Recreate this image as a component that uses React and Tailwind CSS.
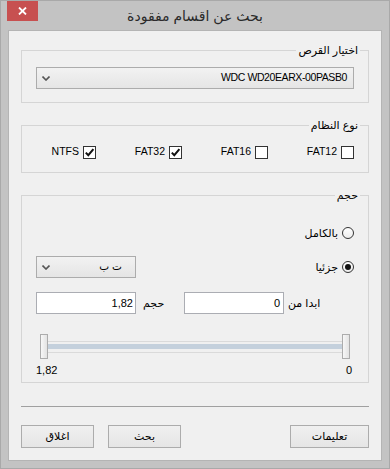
const FONT = "font-['Liberation_Sans','DejaVu_Sans',sans-serif]";

function Chevron() {
  return (
    <svg width="8" height="5" viewBox="0 0 8 5">
      <path d="M0.5 0.5 L4 4 L7.5 0.5" fill="none" stroke="#555" strokeWidth="1.6" />
    </svg>
  );
}

function Combo({ label, className = "", textPad = "pr-[6px]" }) {
  return (
    <div
      className={`flex items-center justify-between h-[22px] border border-[#acacac] bg-gradient-to-b from-[#f2f2f2] to-[#e5e5e5] ${textPad} ${className}`}
    >
      <span className="text-[10.5px] text-black tracking-[-0.4px]">{label}</span>
      <span className="pl-[5px] flex items-center">
        <Chevron />
      </span>
    </div>
  );
}

function CheckBox({ label, checked }) {
  return (
    <div className="flex items-center gap-[4px]">
      <div className="w-[13px] h-[13px] border border-[#333] bg-white flex items-center justify-center">
        {checked && (
          <svg width="11" height="11" viewBox="0 0 11 11">
            <path d="M1.8 5.6 L4.3 8.2 L9.4 2.2" fill="none" stroke="#111" strokeWidth="2" />
          </svg>
        )}
      </div>
      <span className="text-[10.5px] text-black">{label}</span>
    </div>
  );
}

function Radio({ label, checked }) {
  return (
    <div className="flex items-center gap-[4px]">
      <div className="w-[12px] h-[12px] rounded-full border border-[#333] bg-gradient-to-b from-white to-[#ececec] flex items-center justify-center">
        {checked && <div className="w-[6px] h-[6px] rounded-full bg-[#111]" />}
      </div>
      <span className="text-[11px] text-black">{label}</span>
    </div>
  );
}

function Group({ title, children, className = "" }) {
  return (
    <fieldset className={`border border-[#d5d5d5] px-[8px] ${className}`}>
      <legend className="px-[2px] text-[11px] leading-[14px] text-black">{title}</legend>
      <div className="px-[6px]">{children}</div>
    </fieldset>
  );
}

function Button({ label, w }) {
  return (
    <button className={`${w} h-[23px] border border-[#acacac] bg-gradient-to-b from-[#f0f0f0] to-[#e5e5e5] text-[11px] text-black`}>
      {label}
    </button>
  );
}

export default function App() {
  return (
    <div dir="rtl" className={`w-[390px] h-[469px] bg-[#c3c3c3] border border-[#a9a9a9] flex flex-col ${FONT}`}>
      {/* title bar */}
      <div dir="ltr" className="h-[29px] grid grid-cols-[1fr_auto_1fr] items-start">
        <div className="ml-[6px] w-[31px] h-[20px] bg-[#c75050] flex items-center justify-center">
          <svg width="9" height="8" viewBox="0 0 9 8">
            <path d="M1 0.5 L8 7.5 M8 0.5 L1 7.5" stroke="#fff" strokeWidth="1.8" />
          </svg>
        </div>
        <div dir="rtl" className="pt-[5px] text-[14px] leading-[20px] text-[#2a2a2a]">بحث عن اقسام مفقودة</div>
        <div />
      </div>

      {/* client area */}
      <div className="mx-[7px] h-[431px] bg-[#f0f0f0] border border-[#b4b4b4] px-[12px] pt-[12px] flex flex-col">
        <Group title="اختيار القرص">
          <Combo label="WDC WD20EARX-00PASB0" className="mt-[10px]" />
          <div className="h-[13px]" />
        </Group>

        <Group title="نوع النظام" className="mt-[15px]">
          <div className="mt-[13px] h-[14px] flex items-center">
            <div className="w-[86px]"><CheckBox label="FAT12" /></div>
            <div className="w-[86px]"><CheckBox label="FAT16" /></div>
            <div className="w-[86px]"><CheckBox label="FAT32" checked /></div>
            <div><CheckBox label="NTFS" checked /></div>
          </div>
          <div className="h-[13px]" />
        </Group>

        <Group title="حجم" className="mt-[15px]">
          <div className="mt-[24px] h-[14px] flex items-center">
            <Radio label="بالكامل" />
          </div>
          <div className="mt-[16px] h-[22px] flex items-center justify-between">
            <Radio label="جزئيا" checked />
            <Combo label="ت ب" className="w-[100px]" textPad="pr-[13px]" />
          </div>
          <div className="mt-[14px] h-[22px] flex items-center">
            <div className="w-[66px] text-left text-[11px] text-black">ابدا من</div>
            <div className="mr-[4px] w-[100px] h-[22px] border border-[#abadb3] bg-white text-[11px] text-black pr-[3px] flex items-center">0</div>
            <div className="w-[41px] text-left text-[11px] text-black">حجم</div>
            <div className="mr-[7px] w-[100px] h-[22px] border border-[#abadb3] bg-white text-[11px] text-black pr-[2px] flex items-center">1,82</div>
          </div>
          {/* slider */}
          <div dir="ltr" className="mt-[20px] h-[25px] px-[4px] flex items-center">
            <div className="w-[8px] h-[25px] border border-[#acacac] bg-gradient-to-r from-[#f7f7f7] to-[#e3e3e3]" />
            <div className="flex-1 h-[12px] border-y border-[#dadada] flex items-center">
              <div className="w-full h-[5px] bg-[#c4d0dc]" />
            </div>
            <div className="w-[8px] h-[25px] border border-[#acacac] bg-gradient-to-r from-[#f7f7f7] to-[#e3e3e3]" />
          </div>
          <div dir="ltr" className="mt-[4px] h-[14px] flex items-center justify-between text-[11px] text-black">
            <span>1,82</span>
            <span className="pr-[2px]">0</span>
          </div>
          <div className="h-[5px]" />
        </Group>

        <div className="mt-[23px] h-px bg-[#a0a0a0]" />

        <div className="mt-[18px] flex items-center">
          <Button label="تعليمات" w="w-[79px]" />
          <div className="flex-1" />
          <Button label="بحث" w="w-[73px]" />
          <div className="w-[14px]" />
          <Button label="اغلاق" w="w-[73px]" />
        </div>
      </div>
    </div>
  );
}
